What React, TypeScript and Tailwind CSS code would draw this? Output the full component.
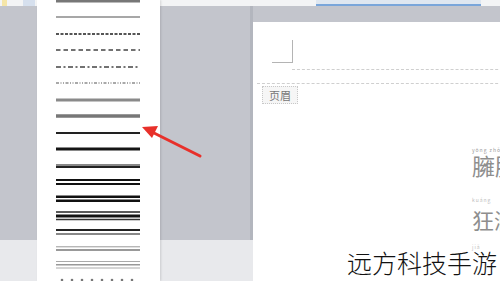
import type { ReactNode } from 'react'

type Stroke = { y: number; w: number; c: string; dash?: string }

// line-style presets listed in the border dropdown (y = centre in panel coords)
const strokes: Stroke[] = [
  { y: 1, w: 3, c: '#777' },
  { y: 17, w: 1.5, c: '#8a8a8a' },
  { y: 34, w: 2, c: '#555', dash: '3 1.5' },
  { y: 50, w: 1.6, c: '#444', dash: '4.5 3' },
  { y: 67, w: 1.6, c: '#444', dash: '5 2.5 2 2.5' },
  { y: 83, w: 1.2, c: '#555', dash: '3 1.5 1 1.5 1 1.5' },
  { y: 100, w: 3, c: '#8a8a8a' },
  { y: 116, w: 3.5, c: '#777' },
  { y: 133, w: 2.2, c: '#222' },
  { y: 149, w: 3, c: '#151515' },
  { y: 165, w: 2, c: '#888' },
  { y: 167, w: 2, c: '#222' },
  { y: 180, w: 2, c: '#111' },
  { y: 184, w: 2, c: '#111' },
  { y: 196.8, w: 2.6, c: '#111' },
  { y: 200.8, w: 2.6, c: '#111' },
  { y: 212, w: 1.5, c: '#222' },
  { y: 216, w: 3, c: '#111' },
  { y: 219.6, w: 1.5, c: '#333' },
  { y: 230, w: 2, c: '#222' },
  { y: 234, w: 2, c: '#888' },
  { y: 246.8, w: 1, c: '#999' },
  { y: 250, w: 2, c: '#999' },
  { y: 261.5, w: 1, c: '#aaa' },
  { y: 264.8, w: 1.5, c: '#999' },
  { y: 268, w: 1, c: '#aaa' },
]

function SideColumn({ width, children }: { width: string; children?: ReactNode }) {
  return (
    <div className={`flex flex-col shrink-0 ${width}`}>
      <div className="h-[6px] bg-[#f3f4f5]">{children}</div>
      <div className="flex-1 bg-[#c3c5cc]" />
      <div className="h-[41px] bg-[#e8e9ec]" />
    </div>
  )
}

function LinePanel() {
  return (
    <div className="w-[123px] shrink-0 bg-white shadow-[1px_0_2px_rgba(0,0,0,0.12)] z-10">
      <svg width="123" height="281" viewBox="0 0 123 281">
        {strokes.map((s, i) => (
          <line
            key={i}
            x1="19"
            x2="103"
            y1={s.y}
            y2={s.y}
            stroke={s.c}
            strokeWidth={s.w}
            strokeDasharray={s.dash}
          />
        ))}
        {[0, 1, 2, 3, 4, 5, 6, 7].map((i) => (
          <circle key={i} cx={25 + i * 10} cy="280" r="1.3" fill="#777" />
        ))}
      </svg>
    </div>
  )
}

function Page() {
  return (
    <div className="flex-1 flex flex-col">
      <div className="h-[6px] flex">
        <div className="w-[63px] bg-[#f3f4f5]" />
        <div className="w-[165px] bg-[#dfe7f0] border-b-[2px] border-[#7aa6da]" />
        <div className="flex-1 bg-[#f3f4f5]" />
      </div>
      <div className="h-[16px] bg-[#c3c5cc]" />
      <div className="flex-1 bg-white flex flex-col overflow-hidden font-['Noto_Sans_CJK_SC',sans-serif]">
        <div className="ml-[19px] mt-[18px] w-[21px] h-[23px] border-r border-b border-[#b4b4b4]" />
        <div className="ml-[39px] mt-[6px] border-t border-dashed border-[#cfcfcf]" />
        <div className="ml-[4px] mt-[13px] border-t border-dashed border-[#cfcfcf]" />
        <div className="ml-[9px] mt-[2px] w-[36px] h-[18px] border border-dotted border-[#c8c8c8] bg-[#f6f6f6] flex items-center justify-center text-[11px] leading-none text-[#777]">
          页眉
        </div>
        <div className="ml-[219px] mt-[43px] flex flex-col whitespace-nowrap">
          <span className="text-[5px] leading-none text-[#999] tracking-[1px]">yōng zhǒng</span>
          <span className="text-[23px] leading-none mt-[2px] text-[#8e8e8e]">臃肿</span>
          <span className="text-[5px] leading-none text-[#bbb] mt-[20px] tracking-[1px]">kuáng</span>
          <span className="text-[22px] leading-none mt-[6px] text-[#8e8e8e]">狂澜</span>
          <span className="text-[5px] leading-none text-[#bbb] mt-[14px] tracking-[1px]">jiǎ</span>
        </div>
      </div>
    </div>
  )
}

export default function App() {
  return (
    <div className="relative w-[500px] h-[281px] overflow-hidden flex bg-[#c3c5cc]">
      <SideColumn width="w-[37px]">
        <div className="flex gap-[4px] pl-[2px] h-full">
          <div className="w-[5px] bg-[#f5e6a8]" />
          <div className="ml-[12px] w-[12px] bg-[#d6e0ee]" />
        </div>
      </SideColumn>
      <LinePanel />
      <div className="w-[93px] shrink-0 flex flex-col">
        <div className="h-[6px] bg-[#f3f4f5]" />
        <div className="flex-1 bg-[#c3c5cc] border-r-[3px] border-[#b3b6be]" />
        <div className="h-[41px] bg-[#e8e9ec]" />
      </div>
      <Page />

      {/* red annotation arrow */}
      <svg className="absolute inset-0 z-20 pointer-events-none" width="500" height="281">
        <line x1="200" y1="156" x2="152" y2="132" stroke="#e8302a" strokeWidth="3" strokeLinecap="round" />
        <polygon points="142,127 158,126 152,138" fill="#e8302a" />
      </svg>

      {/* watermark */}
      <div className="absolute z-20 left-[347px] top-[250px] text-[25px] leading-none text-[#111] whitespace-nowrap font-['Noto_Sans_CJK_SC',sans-serif] font-light">
        远方科技手游
      </div>
    </div>
  )
}
